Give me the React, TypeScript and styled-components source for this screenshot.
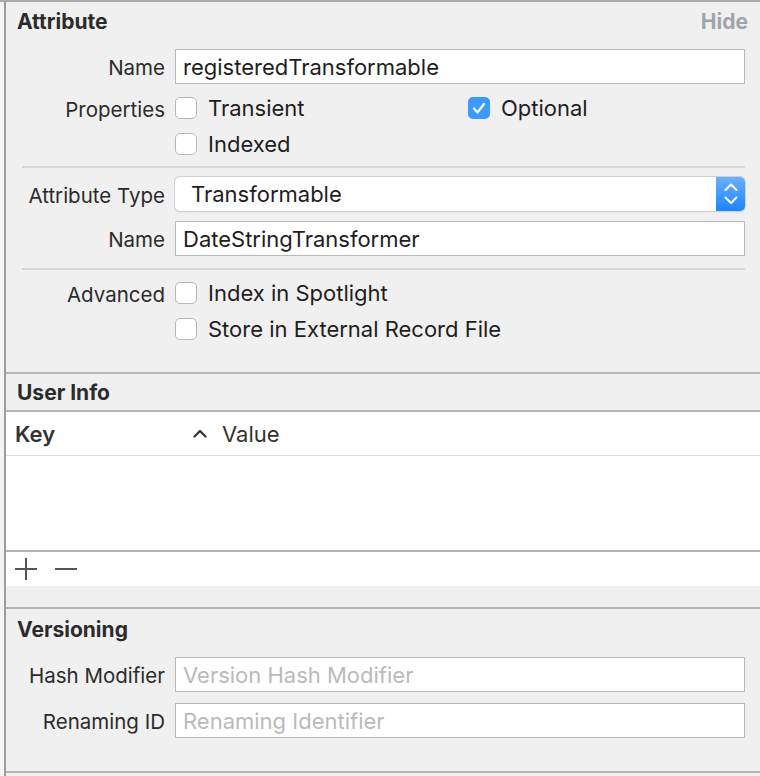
import styled, { createGlobalStyle } from "styled-components";

const GlobalStyle = createGlobalStyle`
  html, body {
    margin: 0;
    padding: 0;
  }
  body {
    background: #f4f4f4;
    font-family: Inter, "Liberation Sans", sans-serif;
    color: #262626;
  }
`;

const Page = styled.div`
  width: 760px;
  height: 776px;
  box-sizing: border-box;
  border-top: 2px solid #ababab;
  padding-left: 4px;
  overflow: hidden;
`;

const Panel = styled.div`
  height: 100%;
  border-left: 2px solid #9c9c9c;
  background: #f0f0f0;
  display: flex;
  flex-direction: column;
`;

const Section = styled.section<{ $padBottom?: number }>`
  border-bottom: 2px solid #b5b5b5;
  padding-bottom: ${({ $padBottom }) => $padBottom ?? 0}px;
`;

const SectionHeader = styled.div<{ $height: number; $ruled?: boolean }>`
  height: ${({ $height }) => $height}px;
  display: flex;
  align-items: center;
  justify-content: space-between;
  padding: 0 12px 0 11px;
  ${({ $ruled }) => ($ruled ? "border-bottom: 2px solid #b5b5b5;" : "")}
`;

const SectionTitle = styled.span`
  font-size: 21px;
  font-weight: 700;
  color: #2b2b2b;
`;

const HideLink = styled.span`
  font-size: 21px;
  font-weight: 700;
  color: #a0a5ad;
`;

const Form = styled.div<{ $top: number }>`
  display: flex;
  flex-direction: column;
  margin-top: ${({ $top }) => $top}px;
`;

const Row = styled.div<{ $height: number; $gap?: number }>`
  display: grid;
  grid-template-columns: 159px 1fr;
  column-gap: 10px;
  align-items: center;
  height: ${({ $height }) => $height}px;
  margin-top: ${({ $gap }) => $gap ?? 0}px;
  padding-right: 15px;
`;

const Label = styled.span`
  text-align: right;
  font-size: 20.5px;
  color: #2b2b2b;
  white-space: nowrap;
  padding-top: 2px;
`;

const TextField = styled.div<{ $placeholder?: boolean }>`
  height: 100%;
  box-sizing: border-box;
  background: #fff;
  border: 1px solid #b9b9b9;
  display: flex;
  align-items: center;
  padding: 1px 0 0 7px;
  font-size: 22px;
  color: ${({ $placeholder }) => ($placeholder ? "#bababa" : "#1e1e1e")};
  white-space: nowrap;
  overflow: hidden;
`;

const Popup = styled.div`
  height: 100%;
  box-sizing: border-box;
  background: #fff;
  border-radius: 5px;
  box-shadow: 0 0 0 1px #d0d0d0, 0 1px 1px rgba(0, 0, 0, 0.25);
  display: flex;
  align-items: center;
  justify-content: space-between;
  font-size: 22px;
  color: #1e1e1e;
  overflow: hidden;
`;

const PopupText = styled.span`
  padding-left: 16px;
`;

const Stepper = styled.div`
  width: 29px;
  height: 100%;
  background: linear-gradient(#69b1fb, #1c84fc);
  display: flex;
  align-items: center;
  justify-content: center;
`;

const Checks = styled.div`
  display: grid;
  grid-template-columns: 293px 1fr;
  align-items: center;
`;

const Check = styled.label`
  display: flex;
  align-items: center;
  gap: 11px;
  font-size: 22px;
  color: #1e1e1e;
  white-space: nowrap;
`;

const Box = styled.span<{ $on?: boolean }>`
  width: 22px;
  height: 22px;
  flex: none;
  box-sizing: border-box;
  border-radius: 5px;
  background: ${({ $on }) => ($on ? "#3c9afc" : "#fff")};
  border: ${({ $on }) => ($on ? "none" : "1px solid #b7b7b7")};
  display: flex;
  align-items: center;
  justify-content: center;
`;

const Separator = styled.div<{ $top: number; $bottom: number }>`
  height: 2px;
  background: #d6d6d6;
  margin: ${({ $top, $bottom }) => `${$top}px 15px ${$bottom}px 16px`};
`;

const Table = styled.div`
  background: #fff;
  display: flex;
  flex-direction: column;
`;

const TableHead = styled.div`
  height: 43px;
  display: grid;
  grid-template-columns: 172px 44px 1fr;
  align-items: center;
  border-bottom: 1px solid #dedede;
  font-size: 22px;
  color: #333;
`;

const HeadCell = styled.span<{ $pad?: number; $weight?: number; $center?: boolean }>`
  padding-left: ${({ $pad }) => $pad ?? 0}px;
  font-weight: ${({ $weight }) => $weight ?? 400};
  display: flex;
  align-items: center;
  justify-content: ${({ $center }) => ($center ? "center" : "flex-start")};
`;

const TableBody = styled.div`
  height: 94px;
  border-bottom: 2px solid #b3b3b3;
`;

const ButtonBar = styled.div`
  height: 34px;
  display: flex;
  align-items: center;
  gap: 18px;
  padding-left: 9px;
`;

const Spacer = styled.div<{ $height: number }>`
  height: ${({ $height }) => $height}px;
`;

const CheckMark = () => (
  <svg width="22" height="22" viewBox="0 0 22 22">
    <path d="M6 11.5l3.5 4L16 7" fill="none" stroke="#fff" strokeWidth="2.2" strokeLinecap="round" strokeLinejoin="round" />
  </svg>
);

const StepperArrows = () => (
  <svg width="14" height="24" viewBox="0 0 14 24">
    <path d="M1.5 8L7 2.5 12.5 8M1.5 15.5L7 21 12.5 15.5" fill="none" stroke="#fff" strokeWidth="2" strokeLinecap="round" strokeLinejoin="round" />
  </svg>
);

const SortCaret = () => (
  <svg width="14" height="9" viewBox="0 0 14 9">
    <path d="M1.5 7.5L7 2l5.5 5.5" fill="none" stroke="#333" strokeWidth="2.2" strokeLinecap="round" strokeLinejoin="round" />
  </svg>
);

const PlusIcon = () => (
  <svg width="22" height="22" viewBox="0 0 22 22">
    <path d="M11 0v22M0 11h22" stroke="#555" strokeWidth="2" />
  </svg>
);

const MinusIcon = () => (
  <svg width="22" height="22" viewBox="0 0 22 22">
    <path d="M0 11h22" stroke="#555" strokeWidth="2" />
  </svg>
);

const CheckItem = ({ label, on }: { label: string; on?: boolean }) => (
  <Check>
    <Box $on={on}>{on && <CheckMark />}</Box>
    {label}
  </Check>
);

export default function App() {
  return (
    <>
      <GlobalStyle />
      <Page>
        <Panel>
          <Section $padBottom={25}>
            <SectionHeader $height={38}>
              <SectionTitle>Attribute</SectionTitle>
              <HideLink>Hide</HideLink>
            </SectionHeader>
            <Form $top={9}>
              <Row $height={35}>
                <Label>Name</Label>
                <TextField>registeredTransformable</TextField>
              </Row>
              <Row $height={36} $gap={6}>
                <Label>Properties</Label>
                <Checks>
                  <CheckItem label="Transient" />
                  <CheckItem label="Optional" on />
                </Checks>
              </Row>
              <Row $height={36}>
                <span />
                <CheckItem label="Indexed" />
              </Row>
              <Separator $top={4} $bottom={9} />
              <Row $height={34}>
                <Label>Attribute Type</Label>
                <Popup>
                  <PopupText>Transformable</PopupText>
                  <Stepper>
                    <StepperArrows />
                  </Stepper>
                </Popup>
              </Row>
              <Row $height={35} $gap={10}>
                <Label>Name</Label>
                <TextField>DateStringTransformer</TextField>
              </Row>
              <Separator $top={12} $bottom={5} />
              <Row $height={36}>
                <Label>Advanced</Label>
                <CheckItem label="Index in Spotlight" />
              </Row>
              <Row $height={36}>
                <span />
                <CheckItem label="Store in External Record File" />
              </Row>
            </Form>
          </Section>

          <Section>
            <SectionHeader $height={36} $ruled>
              <SectionTitle>User Info</SectionTitle>
            </SectionHeader>
            <Table>
              <TableHead>
                <HeadCell $pad={9} $weight={600}>Key</HeadCell>
                <HeadCell $center>
                  <SortCaret />
                </HeadCell>
                <HeadCell>Value</HeadCell>
              </TableHead>
              <TableBody />
              <ButtonBar>
                <PlusIcon />
                <MinusIcon />
              </ButtonBar>
            </Table>
            <Spacer $height={21} />
          </Section>

          <Section $padBottom={33}>
            <SectionHeader $height={40}>
              <SectionTitle>Versioning</SectionTitle>
            </SectionHeader>
            <Form $top={8}>
              <Row $height={35}>
                <Label>Hash Modifier</Label>
                <TextField $placeholder>Version Hash Modifier</TextField>
              </Row>
              <Row $height={35} $gap={11}>
                <Label>Renaming ID</Label>
                <TextField $placeholder>Renaming Identifier</TextField>
              </Row>
            </Form>
          </Section>
        </Panel>
      </Page>
    </>
  );
}
